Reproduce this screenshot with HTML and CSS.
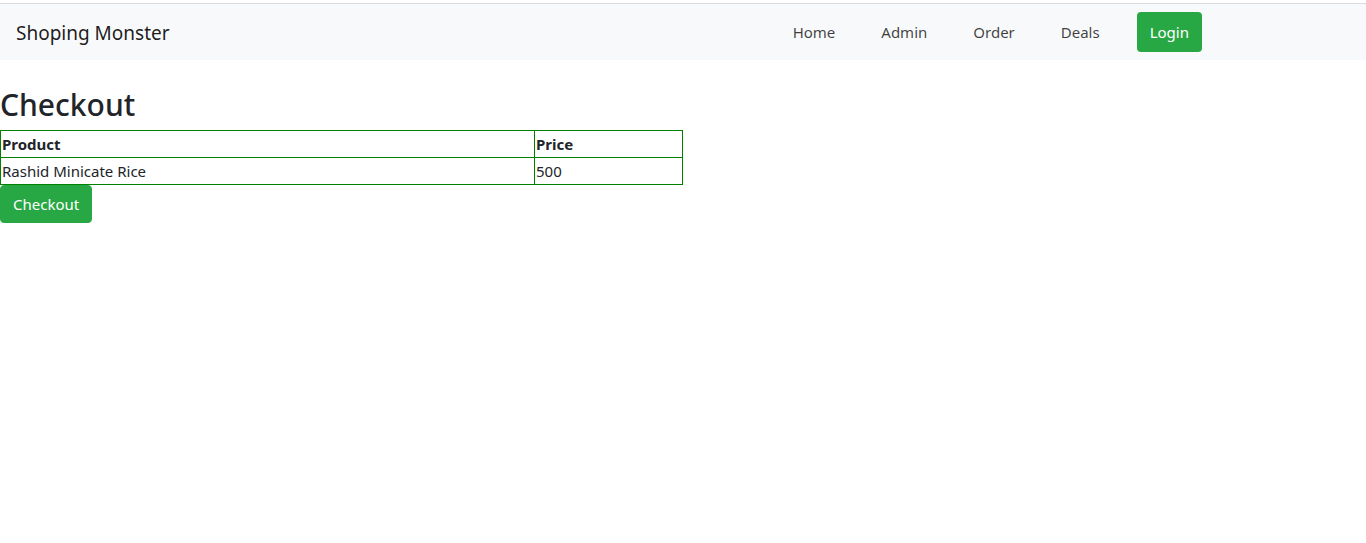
FILE: index.html
```html
<!DOCTYPE html>
<html lang="en">
<head>
<meta charset="utf-8">
<title>Checkout</title>
<link rel="stylesheet" href="styles.css">
</head>
<body>
<div class="topline"></div>
<nav class="navbar">
  <a class="brand" href="#">Shoping Monster</a>
  <ul class="nav">
    <li><a class="nav-link" href="#">Home</a></li>
    <li><a class="nav-link" href="#">Admin</a></li>
    <li><a class="nav-link" href="#">Order</a></li>
    <li><a class="nav-link" href="#">Deals</a></li>
    <li><a class="nav-link login" href="#">Login</a></li>
  </ul>
</nav>
<main class="content">
  <h1 class="title">Checkout</h1>
  <table class="cart">
    <thead>
      <tr><th class="col-product">Product</th><th>Price</th></tr>
    </thead>
    <tbody>
      <tr><td>Rashid Minicate Rice</td><td>500</td></tr>
    </tbody>
  </table>
  <button class="btn-checkout" type="button">Checkout</button>
</main>
</body>
</html>
```

FILE: styles.css
```css
* { box-sizing: border-box; }
body {
  margin: 0;
  font-family: "Noto Sans", "Open Sans", sans-serif;
  font-size: 15px;
  line-height: 24px;
  color: #212529;
  background: #fff;
}
.topline {
  height: 4px;
  border-bottom: 1px solid #dcdcdc;
}
.navbar {
  display: flex;
  align-items: center;
  justify-content: space-between;
  background: #f8f9fa;
  padding: 8px 164px 8px 16px;
  height: 56px;
}
.brand {
  font-size: 19px;
  line-height: 30px;
  padding-top: 2px;
  color: rgba(0,0,0,0.9);
  text-decoration: none;
}
.nav {
  display: flex;
  list-style: none;
  margin: 0;
  padding: 0;
  gap: 22px;
}
.nav-link {
  display: block;
  padding: 8px 12px;
  color: rgba(0,0,0,0.75);
  text-decoration: none;
  line-height: 24px;
}
.nav-link.login {
  margin-left: 3px;
  padding: 8px 13px;
  background: #28a745;
  color: #fff;
  border-radius: 4px;
}
.content {
  padding-top: 26px;
}
.title {
  margin: 0 0 6px;
  font-size: 30px;
  font-weight: 500;
  line-height: 38.4px;
}
.cart {
  width: 50%;
  border-collapse: collapse;
}
.cart th, .cart td {
  border: 1px solid green;
  padding: 1px;
  text-align: left;
}
.cart th { font-weight: 700; }
.col-product { width: 78.3%; }
.btn-checkout {
  display: block;
  font-family: inherit;
  font-size: 15px;
  line-height: 24px;
  padding: 6px 12px;
  border: 1px solid #28a745;
  background: #28a745;
  color: #fff;
  border-radius: 4px;
}
```
